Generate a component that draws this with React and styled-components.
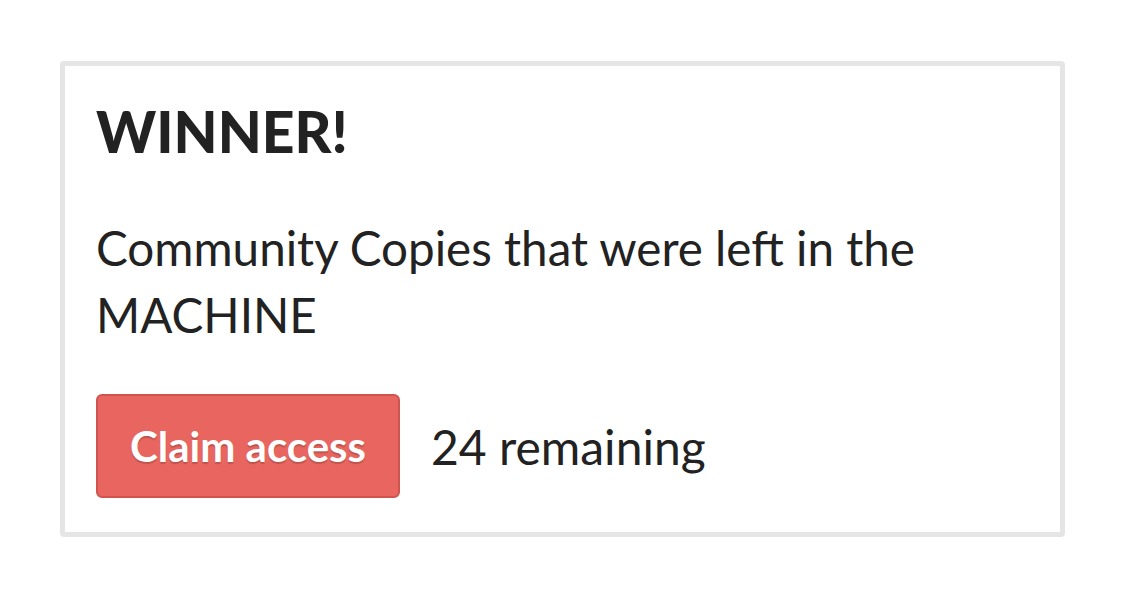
import styled, { createGlobalStyle } from 'styled-components';

const GlobalStyle = createGlobalStyle`
  html, body {
    margin: 0;
    padding: 0;
    background: #fff;
  }
  body {
    font-family: Lato, "Open Sans", "Liberation Sans", sans-serif;
    color: #222;
  }
`;

const Page = styled.div`
  padding-top: 61px;
  padding-left: 60px;
  width: 1005px;
`;

const Card = styled.section`
  border: 5px solid #e5e5e5;
  border-radius: 4px;
  padding: 32px 31px 34px;
  background: #fff;
`;

const Title = styled.h2`
  margin: 0;
  font-size: 57px;
  line-height: 66px;
  font-weight: 900;
  color: #222;
`;

const Text = styled.p`
  margin: 50px 0 0;
  font-size: 47.6px;
  line-height: 67px;
  font-weight: 400;
  color: #222;
`;

const Actions = styled.div`
  display: flex;
  align-items: center;
  gap: 31px;
  margin-top: 46px;
`;

const Button = styled.button`
  height: 104px;
  padding: 0 32px;
  border: 2px solid #d2534e;
  border-radius: 6px;
  background: #e8665f;
  color: #fff;
  font-family: inherit;
  font-size: 42px;
  font-weight: 700;
  text-shadow: 0 2px 1px rgba(0, 0, 0, 0.18);
  cursor: pointer;
`;

const Remaining = styled.span`
  font-size: 48px;
  line-height: 67px;
  color: #222;
`;

function App() {
  return (
    <Page>
      <GlobalStyle />
      <Card>
        <Title>WINNER!</Title>
        <Text>Community Copies that were left in the MACHINE</Text>
        <Actions>
          <Button type="button">Claim access</Button>
          <Remaining>24 remaining</Remaining>
        </Actions>
      </Card>
    </Page>
  );
}

export default App;
